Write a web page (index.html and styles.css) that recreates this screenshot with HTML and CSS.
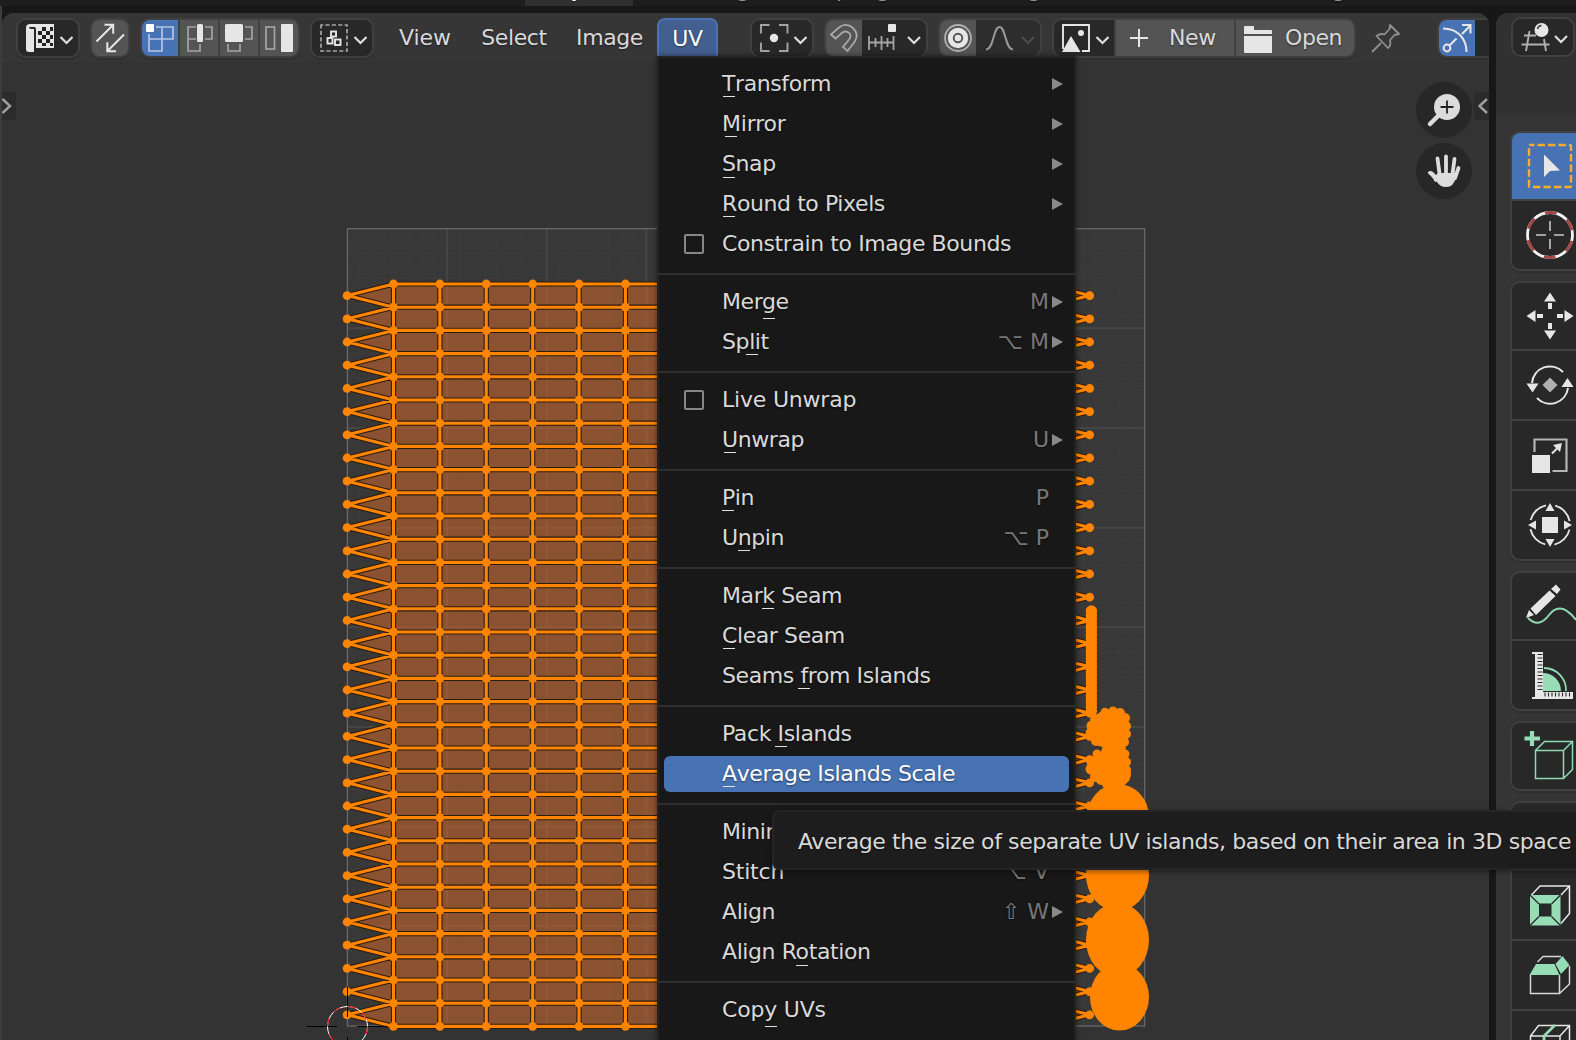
FILE: index.html
```html
<!DOCTYPE html>
<html lang="en">
<head>
<meta charset="utf-8">
<title>UV Editor</title>
<link rel="stylesheet" href="styles.css">
</head>
<body>
<nav class="workspaces">
  <span class="tab tab-active">Layout</span><span class="tab">Modeling</span><span class="tab">Sculpting</span><span class="tab">UV Editing</span><span class="tab">Texture Paint</span><span class="tab">Shading</span>
</nav>
<div class="areas">
  <main class="uv-editor">
    <svg class="canvas" id="uv" width="1487" height="1027" viewBox="2 13 1487 1027"></svg>
    <header class="header">
      <div class="group dark">
        <svg width="60" height="36"><path d="M8 8q0-4 4-4h24v24H18v-2h-2v6H11q-3 0-3-3z" fill="#e6e6e6"/><path d="M11 7h6q1 1 1 3v16h-2V9h-3q-2 0-2-2z" fill="#282828"/><g fill="#222"><path d="M24 7h4v4h-4zM32 7h3v4h-3zM20 11h4v4h-4zM28 11h4v4h-4zM24 15h4v4h-4zM32 15h3v4h-3zM20 19h4v4h-4zM28 19h4v4h-4zM24 23h4v3h-4zM32 23h3v3h-3z"/></g><path class="chev" d="M42.500 17l6 6 6-6"/></svg>
      </div>
      <div class="group light">
        <svg width="36" height="36" class="ico w2"><path d="M4.500 21.500L21 5M12.500 4.800h8.700v9M32 14.500L15.500 31M24 31.200h-8.700v-9"/></svg>
      </div>
      <div class="group light">
        <svg width="36" height="36" class="cell blue"><g fill="none" stroke="#b5c6e4" stroke-width="1.700"><path d="M14 7h17v12H7M7 14v17h13V7M20 19h11"/></g><rect x="4" y="4" width="8" height="8" rx="1" fill="#fff"/></svg>
        <svg width="38" height="36" class="cell"><g fill="none" stroke="#a4a4a4" stroke-width="1.700"><path d="M16 7H8v24h12v-7M8 19h8M25 7h7v12h-7"/></g><rect x="17" y="4" width="6" height="18" rx="1.500" fill="#e6e6e6"/></svg>
        <svg width="38" height="36" class="cell"><g fill="none" stroke="#a4a4a4" stroke-width="1.700"><path d="M8 24v7h12v-7M25 7h7v12h-7"/></g><rect x="5" y="4" width="18" height="18" rx="1.500" fill="#e6e6e6"/></svg>
        <svg width="38" height="36" class="cell"><rect x="6" y="7" width="8.500" height="22" fill="none" stroke="#a4a4a4" stroke-width="1.700"/><rect x="21" y="4" width="12" height="28" rx="1" fill="#e6e6e6"/></svg>
      </div>
      <div class="group dark">
        <svg width="60" height="36"><rect x="9" y="5" width="26" height="26" fill="none" stroke="#a4a4a4" stroke-width="1.700" stroke-dasharray="4.200 2.200" stroke-dashoffset="2"/><g fill="none" stroke="#e6e6e6" stroke-width="1.900"><rect x="19" y="11.500" width="5" height="5"/><rect x="15.500" y="18" width="5" height="5.500"/><rect x="23" y="19.500" width="5.500" height="5.500"/></g><path class="chev" d="M42.500 17l6 6 6-6"/></svg>
      </div>
      <div class="menus">
        <span class="menu-title t-view">View</span><span class="menu-title t-select">Select</span><span class="menu-title t-image">Image</span><span class="menu-title t-uv">UV</span>
      </div>
      <div class="group dark">
        <svg width="60" height="36"><path d="M9 13.500V5h8.500M27 5h8.500v8.500M35.500 22.500V31H27M17.500 31H9v-8.500" fill="none" stroke="#a4a4a4" stroke-width="1.900"/><circle cx="22" cy="18" r="4.200" fill="#e6e6e6"/><path class="chev" d="M42.500 17l6 6 6-6"/></svg>
      </div>
      <div class="group dark">
        <svg width="36" height="36" class="cell lit"><path d="M5 14.500L13 7.500Q20 2 27 8Q33.500 14.500 28.500 22L21.500 31L17 27L23.500 19Q26 15 22.500 12.500Q19.500 10.500 16.500 12.500L9.500 18.500Z" fill="none" stroke="#a8a8a8" stroke-width="1.800"/></svg>
        <svg width="62" height="36"><path d="M5 16v14M11.500 18v9M17.500 16v14M23.500 18v9M29.500 16v14M5 22.500h25" fill="none" stroke="#a4a4a4" stroke-width="1.800"/><rect x="24" y="4" width="8" height="8" rx="1" fill="#e6e6e6"/><path class="chev" d="M44 17l6 6 6-6"/></svg>
      </div>
      <div class="group disabled">
        <svg width="36" height="36" class="cell lit"><circle cx="18" cy="18" r="13" fill="none" stroke="#b0b0b0" stroke-width="1.800"/><circle cx="18" cy="18" r="7.700" fill="none" stroke="#e6e6e6" stroke-width="5"/><circle cx="18" cy="18" r="3.300" fill="#e6e6e6"/></svg>
        <svg width="62" height="36"><path d="M8 29.500c8 0 7-22.500 13.500-22.500S27 29.500 35 29.500" fill="none" stroke="#999" stroke-width="1.900"/><path class="chev dim" d="M44 17l6 6 6-6"/></svg>
      </div>
      <div class="group light">
        <svg width="60" height="36" class="cell darkcell"><path d="M9 29V5h26v26h-7" fill="none" stroke="#e6e6e6" stroke-width="1.900"/><path d="M8 32l9-16 9.500 16z" fill="#e6e6e6"/><circle cx="27" cy="13" r="3" fill="#e6e6e6"/><path class="chev" d="M42.500 17l6 6 6-6"/></svg>
        <div class="cell btn new"><svg width="20" height="20" class="ico w2"><path d="M10 1v18M1 10h18"/></svg><span>New</span></div>
        <div class="cell btn open"><svg width="28" height="28"><path d="M0 1q0-1 1-1h8q1 0 1 1v3h17q1 0 1 1v3H0zM0 10h28v17H1q-1 0-1-1z" fill="#e6e6e6"/></svg><span>Open</span></div>
      </div>
      <svg class="pin" width="30" height="30"><path d="M1 29L10 20M19 2l9 9l-4.500 1L19 17q1.500 5-2 8L5.500 13q4-3 8-1.500L18.500 6z" fill="none" stroke="#8f8f8f" stroke-width="1.800" stroke-linejoin="round"/></svg>
      <div class="group dark gizmo">
        <svg width="36" height="36" class="cell blue ico w2"><path d="M4 8.500C18 8.500 27.500 18 27.500 32M23 14l8.500-8.500M23 5h8.500v8.500M10.500 25.500l7-7"/><circle cx="8" cy="28" r="3.400"/></svg>
        <svg width="40" height="36"></svg>
      </div>
    </header>
    <svg class="edge edge-left" width="14" height="28"><path d="M.5 7l7.500 7-7.500 7"/></svg>
    <svg class="edge edge-right" width="15" height="28"><path d="M13 7l-7.500 7 7.500 7"/></svg>
    <div class="nav-gizmos">
      <svg width="56" height="56"><circle cx="28" cy="28" r="28" fill="#272727"/><path d="M14 42l8-8" stroke="#dcdcdc" stroke-width="4.500" stroke-linecap="round"/><circle cx="31" cy="25" r="13" fill="#dcdcdc"/><path d="M31 18.500v13M24.500 25h13" stroke="#222" stroke-width="1.800"/></svg>
      <svg width="56" height="56"><circle cx="28" cy="28" r="28" fill="#272727"/><path d="M12 29q2.500-2 5 0l3 3 2 6-3 1q-3-6-7-8.500z" fill="#dcdcdc"/><path d="M21.500 15.500l2 15M30 13.500v17M38.500 16l-2 15M42.500 25l-3.500 10" stroke="#dcdcdc" stroke-width="3.800" stroke-linecap="round" fill="none"/><path d="M18 34l4-4h17l1 4q-2 10-10 10q-6 0-9-5z" fill="#dcdcdc"/></svg>
    </div>
  </main>
  <aside class="view3d">
    <div class="v-header"><div class="group dark"><svg width="60" height="36"><path d="M8.500 25.500h28M11 16.500h12M16.500 12l-3.500 20M31 20l2 12" fill="none" stroke="#b0b0b0" stroke-width="1.900"/><circle cx="28.500" cy="11" r="7" fill="#e6e6e6"/><path d="M24.500 10q1-3.500 4-3.500" fill="none" stroke="#333" stroke-width="1.500"/><path class="chev" d="M42 17l6 6 6-6"/></svg></div></div>
    <div class="toolbar">
      <div class="tools">
        <div class="tool active"><svg viewBox="-24 -24 48 48"><rect x="-21" y="-21" width="42" height="42" rx="1" fill="none" stroke="#ffac2a" stroke-width="2.400" stroke-dasharray="7.400 3.100" stroke-dashoffset="3"/><path d="M-6-11.500L10 4.500L0 5L-6 11z" fill="#e6e6e6"/></svg></div>
        <div class="tool"><svg viewBox="-24 -24 48 48"><circle r="22.500" fill="none" stroke="#f4f4f4" stroke-width="2.800"/><circle r="22.500" fill="none" stroke="#a34646" stroke-width="2.900" stroke-dasharray="11.780 11.780" stroke-dashoffset="-6"/><path d="M0-14v10M0 4v10M-14 0h10M4 0h10" stroke="#c9c9c9" stroke-width="1.600"/></svg></div>
      </div>
      <div class="tools">
        <div class="tool"><svg viewBox="-24 -24 48 48" fill="#e6e6e6"><g id="arm"><path d="M0-23.500l6 9h-12zM-2-13h4v6h-4z"/></g><use href="#arm" transform="rotate(90)"/><use href="#arm" transform="rotate(180)"/><use href="#arm" transform="rotate(270)"/></svg></div>
        <div class="tool"><svg viewBox="-24 -24 48 48"><path d="M-18-2A18 18 0 0 1 13-13M18 3A18 18 0 0 1-13 13" fill="none" stroke="#e6e6e6" stroke-width="2"/><path d="M-23.500-1.500h12l-6 9zM11.500 2h12l-6-9z" fill="#e6e6e6"/><path d="M0-7.500L7.500 0L0 7.500L-7.500 0z" fill="#b0b0b0"/></svg></div>
        <div class="tool"><svg viewBox="-24 -24 48 48"><path d="M-15.500-3V-15.500h32V16h-14" fill="none" stroke="#b4b4b4" stroke-width="2.200"/><rect x="-18" y="0" width="18" height="18" fill="#e6e6e6"/><path d="M2-1.500l7-7" stroke="#e6e6e6" stroke-width="2"/><path d="M12-12l-2 9-7-7z" fill="#e6e6e6"/></svg></div>
        <div class="tool"><svg viewBox="-24 -24 48 48"><circle r="20" fill="none" stroke="#e6e6e6" stroke-width="1.800" stroke-dasharray="22 9.400" stroke-dashoffset="-4.700"/><g fill="#e6e6e6"><rect x="-8" y="-8" width="16" height="16"/><g id="tip"><path d="M0-22l4.500 8h-9z"/></g><use href="#tip" transform="rotate(90)"/><use href="#tip" transform="rotate(180)"/><use href="#tip" transform="rotate(270)"/></g></svg></div>
      </div>
      <div class="tools">
        <div class="tool"><svg viewBox="-24 -24 48 48"><path d="M-22 12C-14 20-7 17-1 9S14-2 26 14" fill="none" stroke="#8fdab2" stroke-width="2"/><path d="M-24 12l3-8 5 5zM-19.500 2.500L-.500-15.500L5.500-10L-14 9zM1-17l5-4.500 4.500 5L7-12z" fill="#e6e6e6"/></svg></div>
        <div class="tool"><svg viewBox="-24 -24 48 48"><path d="M-18-23h11V17h30v7H-18v-2h3v-43h-3z" fill="#e6e6e6"/><path d="M-7-2A18 18 0 0 1 11 16H-7z" fill="#96dcb5"/><path d="M-6-7A22 22 0 0 1 16 16" fill="none" stroke="#8fdab2" stroke-width="1.800"/><path d="M-12.500-20.500h5M-12.500-17h5M-12.500-13.500h5M-12.500-10h5M-12.500-6.500h5M-12.500-3h5M-12.500.500h5M-12.500 4h5M-12.500 7.500h5M-12.500 11h5M-12.500 14.500h5M-5 17.500v4M-1.500 17.500v4M2 17.500v4M5.500 17.500v4M9 17.500v4M12.500 17.500v4M16 17.500v4M19.500 17.500v4" stroke="#282828" stroke-width="1.100"/></svg></div>
      </div>
      <div class="tools">
        <div class="tool"><svg viewBox="-24 -24 48 48"><path d="M-18-25v15M-25.500-17.500h15.500" stroke="#96dcb5" stroke-width="4.200"/><path d="M-14.500-5.500h28v28h-28zM-14.500-5.500l9-9H22.500v28l-9 9M13.500-5.500l9-9" fill="none" stroke="#8fdab2" stroke-width="1.500"/></svg></div>
      </div>
      <div class="tools">
        <div class="tool"></div>
        <div class="tool"><svg viewBox="-24 -24 48 48"><path d="M-19-9.500l9-9.500H19.500V8.500L11 18.500M11-10l8.500-9" fill="none" stroke="#e6e6e6" stroke-width="1.500"/><path fill-rule="evenodd" d="M-20-10h30.500V20.500H-20zM-11-1.500v13H1.500v-13z" fill="#96dcb5"/><path d="M-20-10l9 9M10.500-10l-9 9M-20 20.500l9-9M10.500 20.500l-9-9" stroke="#282828" stroke-width="1.300"/></svg></div>
        <div class="tool"><svg viewBox="-24 -24 48 48"><path d="M-12.500-13l5.500-5.500h18M-19.500 0v18.500h29V0M9.500 18.500l10-9.500V-9" fill="none" stroke="#d6d6d6" stroke-width="1.500"/><path d="M-14-11H4.500L9.500 0h-30zM5.500-11l7-8 7 9-8.500 9z" fill="#96dcb5"/></svg></div>
        <div class="tool"><svg viewBox="-24 -24 48 48"><path d="M-19.500-9l8-10.500h31V8l-9 10.500h-30zM-19.500-9h29.500l9-10M10-9v27" fill="none" stroke="#e6e6e6" stroke-width="1.500"/><path d="M-6 18V-9L5-20" fill="none" stroke="#96dcb5" stroke-width="2.800"/></svg></div>
      </div>
    </div>
  </aside>
</div>

<div class="menu">
  <div class="item"><span><u>T</u>ransform</span><i class="sub"></i></div>
  <div class="item wide"><span><u>M</u>irror</span><i class="sub"></i></div>
  <div class="item"><span><u class="d1">S</u>nap</span><i class="sub"></i></div>
  <div class="item"><span><u>R</u>ound to Pixels</span><i class="sub"></i></div>
  <div class="item"><b class="check"></b><span>Constrain to Image Bounds</span></div>
  <hr>
  <div class="item"><span>Mer<u class="d5">g</u>e</span><kbd>M</kbd><i class="sub"></i></div>
  <div class="item"><span>Sp<u>l</u>it</span><kbd>⌥ M</kbd><i class="sub"></i></div>
  <hr>
  <div class="item wide"><b class="check"></b><span>Live Unwrap</span></div>
  <div class="item"><span><u>U</u>nwrap</span><kbd>U</kbd><i class="sub"></i></div>
  <hr>
  <div class="item"><span><u>P</u>in</span><kbd>P</kbd></div>
  <div class="item"><span>U<u>n</u>pin</span><kbd>⌥ P</kbd></div>
  <hr>
  <div class="item"><span>Mar<u>k</u> Seam</span></div>
  <div class="item"><span><u>C</u>lear Seam</span></div>
  <div class="item"><span>Seams <u>f</u>rom Islands</span></div>
  <hr>
  <div class="item"><span>Pack <u>I</u>slands</span></div>
  <div class="item hot"><span><u>A</u>verage Islands Scale</span></div>
  <hr>
  <div class="item"><span>Minimize Stretch</span></div>
  <div class="item wide"><span>Stitch</span><kbd>⌥ V</kbd></div>
  <div class="item"><span>Align</span><kbd>⇧ W</kbd><i class="sub"></i></div>
  <div class="item"><span>Align R<u class="d1">o</u>tation</span></div>
  <hr>
  <div class="item wide"><span>Cop<u class="d5">y</u> UVs</span></div>
</div>
<div class="tooltip">Average the size of separate UV islands, based on their area in 3D space</div>
<script src="uv.js"></script>
</body>
</html>
```
FILE: styles.css
```css
* { box-sizing: border-box; }
body {
  margin: 0; width: 1576px; height: 1040px; overflow: hidden; position: relative;
  background: #171717; color: #d9d9d9;
  font: 22px/26px "DejaVu Sans", sans-serif;
  letter-spacing: -.41px;
  text-shadow: 0 1px 2px rgba(0,0,0,.45);
}
svg { display: block; flex: none; }

.workspaces { height: 6px; display: flex; padding-left: 525px; background: #1d1d1d; overflow: hidden; color: #989898; letter-spacing: -.6px; }
.tab { padding: 0 21.3px 3px; height: 6px; line-height: 26px; white-space: nowrap; display: flex; align-items: flex-end; }
.tab-active { background: #303030; color: #fff; width: 108px; }

.areas { display: flex; gap: 7px; padding: 7px 0 0 2px; height: 1034px; background: linear-gradient(90deg, #3c3c3c 2px, transparent 2px); }
.uv-editor { width: 1487px; flex: none; position: relative; background: #333; border-radius: 12px 12px 0 0; overflow: hidden; }
.canvas { position: absolute; left: 0; top: 0; }
.header { position: relative; height: 49px; background: #363636; display: flex; padding: 5px 0 0 14px; align-items: flex-start; }

.group { display: flex; gap: 2px; height: 40px; flex: none; border: 2px solid #404040; border-radius: 10px; background: #404040; overflow: hidden; margin-right: 10px; box-shadow: 0 2px 0 #2f2f2f; }
.group.dark { background: #282828; }
.group.light { background: #404040; }
.group.light > svg, .cell { background: #545454; }
.group.disabled { background: #2d2d2d; }
.cell { flex: none; height: 36px; }
.cell.lit { background: #545454; }
.group.light > .blue, .cell.blue { background: #4772b3; }
.group.light > .darkcell { background: #282828; }
.chev { fill: none; stroke: #dedede; stroke-width: 2.2; }
.chev.dim { stroke: #4c4c4c; }
.ico { fill: none; stroke: #e6e6e6; }
.w2 { stroke-width: 2; }
.btn { display: flex; align-items: center; }
.new { width: 118px; padding-left: 13px; gap: 20px; }
.open { width: 118px; padding-left: 8px; gap: 13px; }
.open svg { margin-top: 3px; }

.menus { display: flex; }
.menu-title { height: 38px; text-align: center; line-height: 40px; }
.t-view { width: 82px; letter-spacing: -.1px; }
.t-select { width: 96px; }
.t-image { width: 95px; }
.t-uv { width: 61px; background: #435f8f; border: 2px solid #4772b3; border-bottom: 0; border-radius: 8px 8px 0 0; color: #fff; line-height: 37px; margin-right: 32px; }
.pin { margin: 5px 36px 0 5px; }
.gizmo { border-right: 0; border-radius: 10px 0 0 10px; margin: 0; }

.edge { position: absolute; top: 79px; background: #2b2b2b; fill: none; stroke: #a0a0a0; stroke-width: 2.4; }
.edge-left { left: 0; border-radius: 0 4px 4px 0; }
.edge-right { right: 0; border-radius: 4px 0 0 4px; }
.nav-gizmos { position: absolute; right: 17px; top: 69px; display: grid; gap: 5px; }

.view3d { width: 80px; flex: none; background: #353535; border-radius: 12px 0 0 0; overflow: hidden; }
.v-header { height: 102px; background: #313131; padding: 4px 0 0 15px; }
.v-header .group { width: 64px; }
.toolbar { padding: 16px 0 0 14px; display: grid; gap: 10px; }
.tools { display: grid; gap: 2px; border: 2px solid #404040; border-right: 0; border-radius: 10px 0 0 10px; background: #404040; overflow: hidden; box-shadow: 0 2px 0 #2f2f2f; }
.tool { height: 68px; background: #282828; padding-left: 14px; display: flex; align-items: center; }
.tool:first-child { height: 66px; }
.tool.active { background: #4772b3; }
.tool svg { width: 48px; height: 48px; overflow: visible; }

.menu { position: absolute; left: 657px; top: 56px; width: 419px; height: 1000px; padding-top: 8px; background: #181818; border: 2px solid #232323; border-top: 0; box-shadow: 0 0 5px rgba(0,0,0,.5); }
.menu::before { content: ""; position: absolute; left: 0; right: 0; top: 0; height: 2px; background: #232323; }
.item { height: 36px; margin: 2px 5px; padding: 0 20px 0 58px; border-radius: 6px; display: flex; align-items: center; position: relative; white-space: nowrap; }
.item + .item { margin-top: 4px; }
.item > span { flex: 1; }
.wide > span { letter-spacing: -.2px; }
.menu hr { height: 2px; margin: 11px -2px 9px; border: 0; background: #2f2f2f; }
.hot { background: #4772b3; color: #fff; }
u { text-decoration: none; position: relative; }
u::after { content: ""; position: absolute; left: 50%; margin-left: -6px; width: 12px; height: 1.5px; bottom: -1px; background: #e0e0e0; }
u.d1::after { bottom: -2px; }
u.d5::after { bottom: -5px; }
kbd { font: inherit; letter-spacing: 0; color: #777; }
.sub { position: absolute; right: 6px; top: 12px; border: solid transparent; border-width: 6.5px 0 6.5px 11px; border-left-color: #8a8a8a; }
.check { position: absolute; left: 20px; top: 8px; width: 20px; height: 20px; border: 2px solid #868686; border-radius: 2px; }

.tooltip { position: absolute; left: 772px; top: 810px; width: 820px; height: 60px; padding: 16px 0 0 24px; line-height: 28px; white-space: nowrap; background: #1d1d1d; border: 2px solid #252525; border-radius: 8px; box-shadow: 0 2px 5px rgba(0,0,0,.4); }
```
FILE: uv.js
```javascript
const svg = document.getElementById('uv');
const X = 347.4, Y = 228.7, S = 797.3;      // unit square
const CW = 46.39, RH = 23.2, TOP = 284;     // mesh cell size and first row
const B = Y + S;

let fine = '', major = '';
for (let i = 1; i < 64; i++) {
  const p = i * S / 64;
  const seg = `M${X + p} ${Y}V${B}M${X} ${B - p}H${X + S}`;
  if (i % 8) fine += seg; else major += seg;
}

let fill = '', lines = '', dots = '';
const x1 = X + CW, x15 = X + CW * 15, x16 = X + CW * 16;
const dot = (x, y, r = 4.4) => `M${x - r} ${y}a${r} ${r} 0 1 0 ${2 * r} 0a${r} ${r} 0 1 0 ${-2 * r} 0`;
fill += `M${x1} ${TOP}H${x15}V${TOP + 32 * RH}H${x1}z`;
for (let r = 0; r <= 32; r++) {
  const y = TOP + r * RH;
  lines += `M${x1} ${y}H${x15}`;
  for (let c = 1; c <= 6; c++) dots += dot(X + c * CW - .3, y);
  if (r < 32) {
    const m = y + RH / 2, n = y + RH;
    const left = `M${x1} ${y}L${X} ${m}L${x1} ${n}`;
    const right = `M${x15} ${y}L${x16} ${m}L${x15} ${n}`;
    fill += left + right;
    lines += left + right;
    dots += dot(X - .3, m) + dot(x16, m);
  }
}
for (let c = 1; c <= 15; c++) lines += `M${X + c * CW - .3} ${TOP}V${TOP + 32 * RH}`;

// small packed islands: vertices crowd into scalloped outlines
let blobs = '';
for (let y = 611; y <= 714; y += 4) blobs += dot(1091.4, y, 5.7);
[[1105, 712, 4.3], [1113, 711, 4.6], [1120, 713, 5], [1125, 718, 5], [1126, 726, 5], [1126, 734, 5],
 [1124, 742, 5], [1092, 726, 5.5], [1091, 733, 5.5], [1096, 720, 6], [1096, 741, 5], [1114, 730, 15],
 [1107, 723, 13], [1104, 734, 13], [1119, 738, 9], [1097, 754, 4.5], [1092, 762, 5.5], [1091, 769, 5.5],
 [1095, 777, 5], [1103, 768, 12], [1114, 763, 15], [1117, 773, 14], [1125, 754, 4.5], [1126, 762, 5],
 [1126, 770, 5], [1125, 778, 5], [1107, 784, 5], [1101, 780, 5],
 [1107, 744, 6], [1107, 752, 6], [1114, 748, 9], [1118, 746, 8], [1118, 752, 8]].forEach(b => blobs += dot(...b));
const ellipses = [[1118, 817, 31, 33], [1117.5, 875, 31.5, 36], [1117.5, 940, 31.5, 37], [1119.5, 997, 29.5, 33.5]]
  .map(e => `<ellipse cx="${e[0]}" cy="${e[1]}" rx="${e[2]}" ry="${e[3]}"/>`).join('');

svg.innerHTML = `
<rect x="${X}" y="${Y}" width="${S}" height="${S}" fill="#383838"/>
<path d="${fine}" stroke="#3c3c3c" fill="none"/>
<path d="${major}" stroke="#454545" stroke-width="2" fill="none"/>
<rect x="${X}" y="${Y}" width="${S}" height="${S}" fill="none" stroke="#6c6c6c" stroke-width="1.2"/>
<path d="${fill}" fill="#ff7626" fill-opacity=".41"/>
<path d="${lines}" fill="none" stroke="#2b1b10" stroke-width="5.2" stroke-linejoin="round"/>
<path d="${lines}" fill="none" stroke="#ff8500" stroke-width="3.1" stroke-linejoin="round"/>
<g fill="#ff8500"><path d="${dots}"/><path d="${blobs}"/>${ellipses}</g>
<g fill="none"><path d="M307 1026.500h30M357 1026.500h30M347.500 987v30M347.500 1037v10" stroke="#000"/>
<circle cx="347.500" cy="1026.500" r="20" stroke="#fff"/>
<circle cx="347.500" cy="1026.500" r="20" stroke="#f00" stroke-dasharray="7.854 7.854"/></g>`;
```
